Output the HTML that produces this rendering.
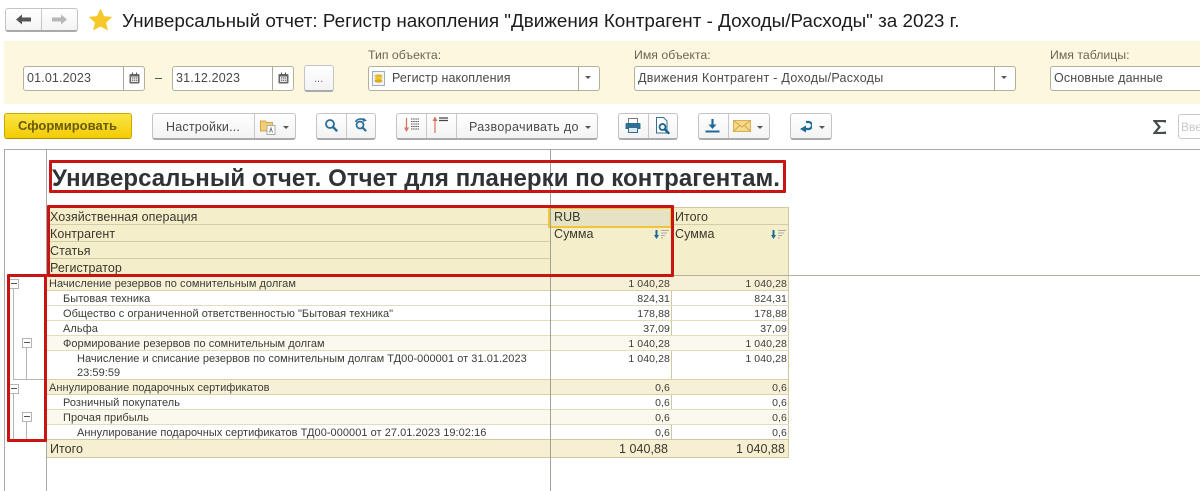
<!DOCTYPE html>
<html lang="ru"><head><meta charset="utf-8"><title>Универсальный отчет</title>
<style>
html,body{margin:0;padding:0;background:#fff}
#p{position:relative;width:1200px;height:491px;overflow:hidden;font-family:"Liberation Sans",Arial,sans-serif;color:#333;background:#fff}
#p div,#p svg,#p span.a{position:absolute}
.t{white-space:nowrap}
.btn{box-sizing:border-box;background:linear-gradient(#fff,#f3f3f3);border:1px solid #c4c4c4;border-bottom:2px solid #aaa;border-radius:3px}
.inp{box-sizing:border-box;background:#fff;border:1px solid #b5b09a;border-radius:3px;height:25px;top:66px}
.vd{width:1px;background:#c8c8c8}
.vi{width:1px;background:#aaa69a;top:67px;height:23px}
.arr{width:0;height:0;border-left:3.5px solid transparent;border-right:3.5px solid transparent;border-top:3.5px solid #555}
.lb{font-size:12.3px;color:#6b6650;top:48px;line-height:14px}
.v{font-size:12.5px;color:#4a4a4a;top:71px;line-height:14px;letter-spacing:.15px}
.tb{font-size:12.5px;color:#4a4a4a;line-height:14px;letter-spacing:.2px}
.r{left:47px;width:741px}
.c{font-size:11px;color:#3c3c34;line-height:13px;white-space:nowrap;letter-spacing:.04px}
.n{font-size:10.5px;color:#3c3c34;line-height:13px;white-space:nowrap;text-align:right;letter-spacing:.1px}
.h{font-size:12.5px;line-height:14px;color:#3a382c;letter-spacing:.05px}
.hl{left:47px;width:742px;height:1px;background:#cfc9a0}
.red{box-sizing:border-box;border:3px solid #c91414;border-radius:1px}
.box{box-sizing:border-box;width:10px;height:10px;background:#fff;border:1px solid #b4b4b4}
.box::after{content:"";position:absolute;left:1px;right:1px;top:3px;height:1px;background:#555}
.tr{background:#b4b4b4}
</style></head><body><div id="p">

<!-- nav -->
<div class="btn" style="left:5px;top:8px;width:73px;height:24px"></div>
<div class="vd" style="left:41px;top:9px;height:21px"></div>
<svg style="left:15px;top:13px" width="17" height="13" viewBox="0 0 17 13"><path d="M1 6.500 7 1.500V4.500h9v4H7v3z" fill="#555"/></svg>
<svg style="left:51px;top:13px" width="17" height="13" viewBox="0 0 17 13"><path d="M16 6.500 10 1.500V4.500H1v4h9v3z" fill="#b8b8b8"/></svg>
<svg style="left:88px;top:8px" width="25" height="23" viewBox="0 0 25 24"><path d="M12.500 .5 16.200 8.500 24.800 9.300 18.300 15.200 20.200 23.500 12.500 19.300 4.800 23.500 6.700 15.200 .2 9.300 8.800 8.500z" fill="#f6c829"/></svg>
<div class="t" style="left:122px;top:10px;font-size:18.88px;line-height:21px;color:#1c1c1c">Универсальный отчет: Регистр накопления "Движения Контрагент - Доходы/Расходы" за 2023 г.</div>

<!-- filter band -->
<div style="left:4px;top:41px;width:1196px;height:63px;background:#fbf8df"></div>
<div class="inp" style="left:23px;width:122px"></div><div class="vi" style="left:123px"></div>
<div class="t v" style="left:27px">01.01.2023</div>
<svg style="left:129px;top:72px" width="11" height="12" viewBox="0 0 11 12"><path d="M1.500 2h8a1 1 0 0 1 1 1v7.500a1 1 0 0 1-1 1h-8a1 1 0 0 1-1-1V3a1 1 0 0 1 1-1z" fill="#666"/><rect x="2" y="4.500" width="7" height="5.500" fill="#e8e8e8"/><path d="M3 5.500h1.200v1H3zM5 5.500h1.200v1H5zM7 5.500h1.200v1H7zM3 7.800h1.200v1H3zM5 7.800h1.200v1H5zM7 7.800h1.200v1H7z" fill="#555"/><path d="M3 .5h1v2H3zM7 .5h1v2H7z" fill="#555"/></svg>
<div style="left:155px;top:78px;width:7px;height:1px;background:#555"></div>
<div class="inp" style="left:172px;width:122px"></div><div class="vi" style="left:272px"></div>
<div class="t v" style="left:176px">31.12.2023</div>
<svg style="left:278px;top:72px" width="11" height="12" viewBox="0 0 11 12"><path d="M1.500 2h8a1 1 0 0 1 1 1v7.500a1 1 0 0 1-1 1h-8a1 1 0 0 1-1-1V3a1 1 0 0 1 1-1z" fill="#666"/><rect x="2" y="4.500" width="7" height="5.500" fill="#e8e8e8"/><path d="M3 5.500h1.200v1H3zM5 5.500h1.200v1H5zM7 5.500h1.200v1H7zM3 7.800h1.200v1H3zM5 7.800h1.200v1H5zM7 7.800h1.200v1H7z" fill="#555"/><path d="M3 .5h1v2H3zM7 .5h1v2H7z" fill="#555"/></svg>
<div class="btn" style="left:304px;top:65px;width:30px;height:27px"></div>
<div class="t" style="left:314px;top:73px;font-size:11px;line-height:13px;color:#666">...</div>

<div class="t lb" style="left:368px">Тип объекта:</div>
<div class="inp" style="left:368px;width:232px"></div><div class="vi" style="left:578px"></div>
<svg style="left:372px;top:71px" width="13" height="15" viewBox="0 0 13 15"><rect x=".5" y=".5" width="12" height="14" fill="#f2f4f6" stroke="#9cb0c0"/><ellipse cx="6.500" cy="5" rx="4" ry="1.600" fill="#e3b72c"/><ellipse cx="6.500" cy="7.500" rx="4" ry="1.600" fill="#edc63a"/><ellipse cx="6.500" cy="10" rx="4" ry="1.600" fill="#d9a922"/></svg>
<div class="t v" style="left:392px;letter-spacing:.1px">Регистр накопления</div>
<div class="arr" style="left:585px;top:76px"></div>

<div class="t lb" style="left:634px">Имя объекта:</div>
<div class="inp" style="left:634px;width:382px"></div><div class="vi" style="left:994px"></div>
<div class="t v" style="left:638px;letter-spacing:.28px">Движения Контрагент - Доходы/Расходы</div>
<div class="arr" style="left:1001px;top:76px"></div>

<div class="t lb" style="left:1050px">Имя таблицы:</div>
<div class="inp" style="left:1050px;width:170px"></div>
<div class="t v" style="left:1054px">Основные данные</div>

<!-- toolbar -->
<div style="left:4px;top:113px;width:128px;height:26px;box-sizing:border-box;border:1px solid #c9a800;border-bottom:1px solid #a98f00;border-radius:3px;background:linear-gradient(#fbe64a,#f3cb00)"></div>
<div class="t" style="left:18px;top:119px;font-size:13px;line-height:14px;font-weight:bold;color:#6a5a10">Сформировать</div>

<div class="btn" style="left:152px;top:113px;width:144px;height:27px"></div><div class="vd" style="left:254px;top:114px;height:24px"></div>
<div class="t tb" style="left:166px;top:120px">Настройки...</div>
<svg style="left:260px;top:118px" width="17" height="17" viewBox="0 0 17 17"><path d="M.5 3h5l1 1.500h6V13H.5z" fill="#f2cf76" stroke="#cfa64a"/><rect x="7" y="7.500" width="8" height="9" fill="#fff" stroke="#aaa"/><path d="M9.500 14.500 11 10l1.500 4.500" fill="none" stroke="#777"/></svg>
<div class="arr" style="left:283px;top:126px"></div>

<div class="btn" style="left:316px;top:113px;width:60px;height:27px"></div><div class="vd" style="left:346px;top:114px;height:24px"></div>
<svg style="left:324px;top:118px" width="14" height="15" viewBox="0 0 14 15"><circle cx="6" cy="6" r="4" fill="#eef4f8" stroke="#2a6f96" stroke-width="1.800"/><path d="M9 9l3.500 3.500" stroke="#2a6f96" stroke-width="2.400" stroke-linecap="round"/></svg>
<svg style="left:354px;top:117px" width="15" height="16" viewBox="0 0 15 16"><circle cx="6" cy="8" r="3.500" fill="#eef4f8" stroke="#2a6f96" stroke-width="1.700"/><path d="M8.500 10.500l3 3" stroke="#2a6f96" stroke-width="2.200" stroke-linecap="round"/><path d="M1.500 5C3 2 7 1 10 3" fill="none" stroke="#2a6f96" stroke-width="1.600"/><path d="M9 .8 13 3.500 8.800 5z" fill="#2a6f96"/></svg>

<div class="btn" style="left:396px;top:113px;width:202px;height:27px"></div><div class="vd" style="left:426px;top:114px;height:24px"></div><div class="vd" style="left:456px;top:114px;height:24px"></div>
<svg style="left:402px;top:116px" width="18" height="18" viewBox="0 0 18 18"><path d="M4.500 2v12" stroke="#d9715c" stroke-width="1.200"/><path d="M2 11.500 4.500 16 7 11.500z" fill="#d9715c"/><path d="M9 3h8M9 5.500h8M9 8h8M9 10.500h8M9 13h8" stroke="#555" stroke-width="1" stroke-dasharray="1.500 .7"/></svg>
<svg style="left:431px;top:115px" width="18" height="18" viewBox="0 0 18 18"><path d="M4 5v13" stroke="#d9715c" stroke-width="1.200"/><path d="M1.500 6 4 1.500 6.500 6z" fill="#d9715c"/><path d="M8 3h9M8 5.500h9" stroke="#444" stroke-width="1.200"/></svg>
<div class="t tb" style="left:469px;top:120px;letter-spacing:.35px">Разворачивать до</div>
<div class="arr" style="left:585px;top:126px"></div>

<div class="btn" style="left:618px;top:113px;width:60px;height:27px"></div><div class="vd" style="left:648px;top:114px;height:24px"></div>
<svg style="left:625px;top:118px" width="16" height="15" viewBox="0 0 16 15"><rect x="3.500" y=".5" width="9" height="5" fill="#fff" stroke="#777"/><path d="M1.500 5h13a1 1 0 0 1 1 1v5h-3v-2h-9v2h-3V6a1 1 0 0 1 1-1z" fill="#2f6f96"/><rect x="3.500" y="9.500" width="9" height="5" fill="#dfe8ee" stroke="#2f6f96"/></svg>
<svg style="left:656px;top:117px" width="15" height="17" viewBox="0 0 15 17"><path d="M.5.500h7l3.500 3.500v12H.5z" fill="#fff" stroke="#3a6f90"/><circle cx="6.500" cy="10" r="3" fill="#eef4f8" stroke="#16628c" stroke-width="1.700"/><path d="M9 12.500l3.500 3.500" stroke="#16628c" stroke-width="2.400" stroke-linecap="round"/></svg>

<div class="btn" style="left:698px;top:113px;width:72px;height:27px"></div><div class="vd" style="left:728px;top:114px;height:24px"></div>
<svg style="left:705px;top:118px" width="15" height="15" viewBox="0 0 15 15"><path d="M7.500 1v7" stroke="#1d6a96" stroke-width="2.200"/><path d="M3.500 6.500h8l-4 4.500z" fill="#1d6a96"/><path d="M.5 13.500h14" stroke="#1d6a96" stroke-width="2"/></svg>
<svg style="left:733px;top:120px" width="18" height="12" viewBox="0 0 18 12"><rect x=".5" y=".5" width="17" height="11" fill="#f6d98a" stroke="#d9b050"/><path d="M.5.500 9 7l8.500-6.500M.5 11.500 6.500 5.500M17.500 11.500l-6-6" fill="none" stroke="#d3a544"/></svg>
<div class="arr" style="left:757px;top:126px"></div>

<div class="btn" style="left:790px;top:113px;width:42px;height:27px"></div>
<svg style="left:798px;top:119px" width="14" height="14" viewBox="0 0 14 14"><path d="M7 10h3.500a2.800 2.800 0 0 0 0-7H8" fill="none" stroke="#1d6a96" stroke-width="2.200"/><path d="M8 6.500 2 10l6 3.500z" fill="#1d6a96"/></svg>
<div class="arr" style="left:819px;top:126px"></div>

<svg style="left:1153px;top:120px" width="13" height="14" viewBox="0 0 13 14"><path d="M12 2.500V1H1.500L6.500 7 1.500 13H12v-1.500" fill="none" stroke="#474c4f" stroke-width="2.200"/></svg>
<div style="left:1178px;top:114px;width:40px;height:25px;box-sizing:border-box;border:1px solid #c9c9c9;border-radius:3px;background:#fff"></div>
<div class="t" style="left:1181px;top:120px;font-size:12px;line-height:14px;color:#c8c8c8">Вве</div>

<!-- frame -->
<div style="left:4px;top:149px;width:1196px;height:1px;background:#a9a9a9"></div>
<div style="left:4px;top:149px;width:1px;height:342px;background:#a9a9a9"></div>
<div style="left:46px;top:150px;width:1px;height:341px;background:#a9a9a9"></div>

<!-- header -->
<div class="r" style="top:207px;height:68px;background:#f5eecb;width:742px"></div>
<div class="hl" style="top:224px;width:503px;background:#d3cca6"></div>
<div class="hl" style="top:241px;width:503px;background:#d3cca6"></div>
<div class="hl" style="top:258px;width:503px;background:#d3cca6"></div>
<div class="hl" style="top:207px"></div>
<div style="left:548px;top:207px;width:124px;height:21px;box-sizing:border-box;border:2px solid #f2c33c;background:#e6e2c4"></div>
<div style="left:671px;top:207px;width:1px;height:250px;background:#cfc9a0"></div>
<div style="left:788px;top:207px;width:1px;height:250px;background:#cfc9a0"></div>
<div style="left:672px;top:224px;width:116px;height:1px;background:#d3cca6"></div>

<div class="t h" style="left:50px;top:210px">Хозяйственная операция</div>
<div class="t h" style="left:50px;top:227px">Контрагент</div>
<div class="t h" style="left:50px;top:244px">Статья</div>
<div class="t h" style="left:50px;top:261px">Регистратор</div>
<div class="t h" style="left:554px;top:210px">RUB</div>
<div class="t h" style="left:675px;top:210px">Итого</div>
<div class="t h" style="left:554px;top:227px">Сумма</div>
<div class="t h" style="left:675px;top:227px">Сумма</div>
<svg style="left:653px;top:229px" width="16" height="11" viewBox="0 0 16 11"><path d="M3.500 1v6" stroke="#1d6a96" stroke-width="2"/><path d="M1 6h5L3.500 10z" fill="#1d6a96"/><path d="M8 1.500h8M8 4h6M8 6.500h4M8 9h2" stroke="#aaa" stroke-width="1"/></svg>
<svg style="left:770px;top:229px" width="16" height="11" viewBox="0 0 16 11"><path d="M3.500 1v6" stroke="#1d6a96" stroke-width="2"/><path d="M1 6h5L3.500 10z" fill="#1d6a96"/><path d="M8 1.500h8M8 4h6M8 6.500h4M8 9h2" stroke="#aaa" stroke-width="1"/></svg>

<!-- rows bg -->
<div class="r" style="top:276px;height:15px;background:#f6f0d6;width:741px"></div>
<div class="r" style="top:336px;height:14px;background:#fbf9ee"></div>
<div class="r" style="top:380px;height:14px;background:#f6f0d6"></div>
<div class="r" style="top:410px;height:14px;background:#fbf9ee"></div>
<div class="r" style="top:440px;height:17px;background:#f6efd2"></div>
<div style="left:46px;top:275px;width:1154px;height:1px;background:#b4b0a0"></div>

<div class="hl" style="top:290px;background:#d8d2a8"></div>
<div class="hl" style="top:305px;background:#e2ddbc"></div>
<div class="hl" style="top:320px;background:#e2ddbc"></div>
<div class="hl" style="top:335px;background:#e2ddbc"></div>
<div class="hl" style="top:350px;background:#e2ddbc"></div>
<div class="hl" style="top:379px;background:#d8d2a8"></div>
<div class="hl" style="top:394px;background:#d8d2a8"></div>
<div class="hl" style="top:409px;background:#e2ddbc"></div>
<div class="hl" style="top:424px;background:#e2ddbc"></div>
<div class="hl" style="top:439px;background:#cfc9a0"></div>
<div class="hl" style="top:457px;background:#cfc9a0"></div>

<div style="left:550px;top:150px;width:1px;height:341px;background:#a3a094"></div>

<!-- row text -->
<div class="c" style="left:49px;top:278px">Начисление резервов по сомнительным долгам</div>
<div class="c" style="left:63px;top:293px">Бытовая техника</div>
<div class="c" style="left:63px;top:308px">Общество с ограниченной ответственностью "Бытовая техника"</div>
<div class="c" style="left:63px;top:323px">Альфа</div>
<div class="c" style="left:63px;top:338px">Формирование резервов по сомнительным долгам</div>
<div class="c" style="left:77px;top:353px">Начисление и списание резервов по сомнительным долгам ТД00-000001 от 31.01.2023</div>
<div class="c" style="left:77px;top:367px">23:59:59</div>
<div class="c" style="left:49px;top:382px">Аннулирование подарочных сертификатов</div>
<div class="c" style="left:63px;top:397px">Розничный покупатель</div>
<div class="c" style="left:63px;top:412px">Прочая прибыль</div>
<div class="c" style="left:77px;top:427px">Аннулирование подарочных сертификатов ТД00-000001 от 27.01.2023 19:02:16</div>
<div class="t h" style="left:50px;top:442px">Итого</div>

<div class="n" style="left:551px;width:119px;top:278px">1 040,28</div><div class="n" style="left:672px;width:115px;top:278px">1 040,28</div>
<div class="n" style="left:551px;width:119px;top:293px">824,31</div><div class="n" style="left:672px;width:115px;top:293px">824,31</div>
<div class="n" style="left:551px;width:119px;top:308px">178,88</div><div class="n" style="left:672px;width:115px;top:308px">178,88</div>
<div class="n" style="left:551px;width:119px;top:323px">37,09</div><div class="n" style="left:672px;width:115px;top:323px">37,09</div>
<div class="n" style="left:551px;width:119px;top:338px">1 040,28</div><div class="n" style="left:672px;width:115px;top:338px">1 040,28</div>
<div class="n" style="left:551px;width:119px;top:353px">1 040,28</div><div class="n" style="left:672px;width:115px;top:353px">1 040,28</div>
<div class="n" style="left:551px;width:119px;top:382px">0,6</div><div class="n" style="left:672px;width:115px;top:382px">0,6</div>
<div class="n" style="left:551px;width:119px;top:397px">0,6</div><div class="n" style="left:672px;width:115px;top:397px">0,6</div>
<div class="n" style="left:551px;width:119px;top:412px">0,6</div><div class="n" style="left:672px;width:115px;top:412px">0,6</div>
<div class="n" style="left:551px;width:119px;top:427px">0,6</div><div class="n" style="left:672px;width:115px;top:427px">0,6</div>
<div class="t h" style="left:551px;width:117px;top:442px;text-align:right">1 040,88</div>
<div class="t h" style="left:672px;width:113px;top:442px;text-align:right">1 040,88</div>

<!-- grouping tree -->
<div class="tr" style="left:13px;top:288px;width:1px;height:91px"></div>
<div class="tr" style="left:13px;top:379px;width:33px;height:1px"></div>
<div class="tr" style="left:26px;top:348px;width:1px;height:31px"></div>
<div class="tr" style="left:13px;top:393px;width:1px;height:47px"></div>
<div class="tr" style="left:26px;top:422px;width:1px;height:18px"></div>
<div class="box" style="left:9px;top:279px"></div>
<div class="box" style="left:22px;top:338px"></div>
<div class="box" style="left:9px;top:384px"></div>
<div class="box" style="left:22px;top:412px"></div>

<!-- title -->
<div class="t" style="left:52px;top:165px;font-size:24px;line-height:28px;font-weight:bold;color:#2f3336;letter-spacing:.06px">Универсальный отчет. Отчет для планерки по контрагентам.</div>

<!-- red annotations -->
<div class="red" style="left:49px;top:160px;width:737px;height:33px"></div>
<div class="red" style="left:47px;top:205px;width:627px;height:72px"></div>
<div class="red" style="left:7px;top:274px;width:40px;height:168px"></div>

</div></body></html>
